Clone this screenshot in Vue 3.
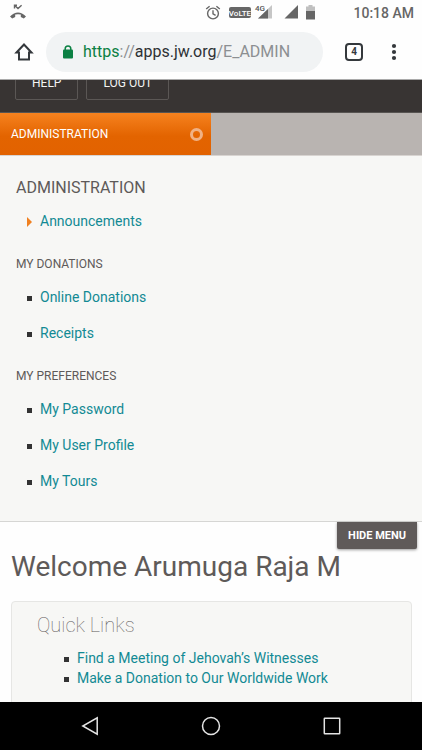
<script setup>
const groups = [
  { title: 'ADMINISTRATION', main: true, links: ['Announcements'] },
  { title: 'MY DONATIONS', links: ['Online Donations', 'Receipts'] },
  { title: 'MY PREFERENCES', links: ['My Password', 'My User Profile', 'My Tours'] }
]
const quickLinks = [
  'Find a Meeting of Jehovah’s Witnesses',
  'Make a Donation to Our Worldwide Work'
]
</script>

<template>
  <div class="screen">
    <div class="status">
      <svg class="missed" width="18" height="16" viewBox="0 0 18 16" aria-hidden="true">
        <path d="M5.500 4.500V1.200H8M5.500 1.300L9 4.600L12.600 1.200" fill="none" stroke="#666" stroke-width="1.400" />
        <path d="M1 12.400Q9 4.800 17 12.400L14.800 14.600L11.800 13V10.600Q9 9.800 6.200 10.600V13L3.200 14.600Z" fill="#666" />
      </svg>
      <svg class="indicators" width="112" height="18" viewBox="0 0 112 18" aria-hidden="true">
        <g fill="none" stroke="#666" stroke-width="1.4">
          <circle cx="8" cy="9.500" r="5.4" />
          <path d="M8 6.200V9.800L10.600 11.400M1.200 5L4.600 2.200M14.800 5L11.400 2.200" />
        </g>
        <rect x="24" y="3" width="22" height="11" rx="2" fill="#666" />
        <text x="35" y="12" class="volte" text-anchor="middle" fill="#fff">VoLTE</text>
        <path d="M67 1V14.500H53Z" fill="#c6c6c6" />
        <path d="M63 5V14.500H53Z" fill="#666" />
        <text x="50" y="7" class="net" fill="#555">4G</text>
        <path d="M93 1V14.500H79.500Z" fill="#666" />
        <path d="M101 2.500H103.500V1H107.500V2.500H110V7.500H101Z" fill="#c0c0c0" />
        <path d="M101 7H110V15.500H101Z" fill="#666" />
      </svg>
      <time>10:18 AM</time>
    </div>

    <div class="toolbar">
      <button class="icon home" type="button" aria-label="Home">
        <svg width="20" height="20" viewBox="0 0 20 20"><path d="M2.500 10.500L10 2.500L17.500 10.500H15V17.500H5V10.500Z" fill="none" stroke="#34383c" stroke-width="2" /></svg>
      </button>
      <div class="address">
        <svg width="12" height="14" viewBox="0 0 12 14" aria-hidden="true">
          <path d="M3.200 6V3.800A2.800 2.800 0 0 1 8.800 3.800V6" fill="none" stroke="#0b8043" stroke-width="1.500" />
          <rect x="1" y="4.500" width="10" height="9" rx="1" fill="#0b8043" />
        </svg>
        <span class="url"><span class="secure">https</span><span class="dim">://</span>apps.jw.org<span class="dim">/E_ADMIN</span></span>
      </div>
      <button class="tabs" type="button" aria-label="Open tabs">4</button>
      <button class="icon more" type="button" aria-label="More options">
        <svg width="6" height="18" viewBox="0 0 6 18" fill="#34383c"><circle cx="3" cy="3" r="2.100" /><circle cx="3" cy="9" r="2.100" /><circle cx="3" cy="15" r="2.100" /></svg>
      </button>
    </div>

    <main class="page">
      <header class="site">
        <button type="button">HELP</button>
        <button type="button">LOG OUT</button>
      </header>
      <div class="section">
        <button type="button">ADMINISTRATION<span class="ring"></span></button>
      </div>
      <nav class="menu">
        <section v-for="g in groups" :key="g.title" :class="{ main: g.main }">
          <h2>{{ g.title }}</h2>
          <ul>
            <li v-for="l in g.links" :key="l"><a href="#">{{ l }}</a></li>
          </ul>
        </section>
        <button class="hide" type="button">HIDE MENU</button>
      </nav>
      <div class="content">
        <h1>Welcome Arumuga Raja M</h1>
        <section class="card">
          <h2>Quick Links</h2>
          <ul>
            <li v-for="l in quickLinks" :key="l"><a href="#">{{ l }}</a></li>
          </ul>
        </section>
      </div>
    </main>

    <div class="system">
      <button type="button" aria-label="Back">
        <svg width="20" height="20" viewBox="0 0 20 20"><path d="M17.200 1.800V18.200L2.800 10Z" /></svg>
      </button>
      <button type="button" aria-label="Home screen">
        <svg width="20" height="20" viewBox="0 0 20 20"><circle cx="10" cy="10" r="8.500" /></svg>
      </button>
      <button type="button" aria-label="Recent apps">
        <svg width="20" height="20" viewBox="0 0 20 20"><rect x="2.300" y="2.300" width="15.400" height="15.400" rx="0.500" /></svg>
      </button>
    </div>
  </div>
</template>

<style>
body { margin: 0; background: #fff; }
</style>

<style scoped>
* { box-sizing: border-box; }
.screen { display: flex; flex-direction: column; height: 100vh; font-family: Roboto, "Liberation Sans", sans-serif; background: #fefefe; color: #5e5a59; }
button { font: inherit; margin: 0; padding: 0; border: 0; background: none; color: inherit; }
svg { display: block; }
h1, h2, ul { margin: 0; padding: 0; font-weight: 400; list-style: none; }
a { color: #128a94; text-decoration: none; }

.status { flex: none; display: flex; align-items: center; height: 26px; padding: 0 8px 0 9px; }
.missed { margin-bottom: 2px; }
.indicators { margin-left: auto; margin-right: 36px; }
.volte { font: 500 8px Roboto, sans-serif; }
.net { font: 500 8px Roboto, sans-serif; }
time { font-size: 14px; font-weight: 500; color: #666; }

.toolbar { flex: none; display: flex; align-items: center; height: 54px; padding: 0 25px 2px 14px; border-bottom: 1px solid #aaa; }
.address { flex: 1; display: flex; align-items: center; gap: 9px; height: 40px; margin: 0 22px 0 12px; padding: 0 16px; border-radius: 20px; background: #f1f3f4; }
.url { font-size: 16px; color: #2e3134; white-space: nowrap; }
.secure { color: #0b8043; }
.dim { color: #8c8f92; }
.tabs { width: 18px; height: 18px; margin-right: 28px; border: 2px solid #34383c; border-radius: 4px; font-size: 10px; line-height: 14px; font-weight: 700; color: #34383c; }

.page { flex: 1; min-height: 0; overflow: hidden; }
.site { display: flex; align-items: flex-end; gap: 8px; height: 33px; padding: 0 15px 12px; overflow: hidden; background: #383433; border-bottom: 1px solid #575452; }
.site button { flex: none; height: 34px; padding: 0 16px; border: 1px solid #5b5755; border-radius: 2px; font-size: 12px; color: #f4f4f4; }
.section { display: flex; background: #b9b4b1; border-bottom: 1px solid #d8d4d1; }
.section button { display: flex; align-items: center; justify-content: space-between; width: 50%; height: 42px; padding: 0 8px 0 11px; font-size: 12px; color: #fff; background: linear-gradient(#f6821f, #e36400 55%, #e26200); }
.ring { width: 13px; height: 13px; border: 3px solid #f0b184; border-radius: 50%; }

.menu { position: relative; padding: 19px 16px 22px; background: #f7f7f5; border-bottom: 1px solid #d6d6d4; }
.menu h2 { font-size: 12px; line-height: 26px; }
.menu .main h2 { font-size: 16px; line-height: 26px; }
.menu ul { padding-top: 2px; }
.menu section + section { padding-top: 12px; }
.menu li { display: flex; align-items: center; height: 36px; font-size: 14px; padding-left: 11px; }
li::before { content: ""; flex: none; width: 5px; height: 5px; margin: 2px 8px 0 0; background: #333; }
.main li::before { width: 0; height: 0; border: solid transparent; border-width: 5px 0 5px 5px; border-left-color: #f08020; background: none; }
.hide { position: absolute; right: 5px; top: 100%; padding: 0 11px; margin-top: 1px; font-size: 11px; line-height: 27px; font-weight: 700; color: #fff; background: #5f5a59; border-radius: 0 0 2px 2px; box-shadow: 0 1px 3px #0006; }

.content { padding: 27px 10px 0 11px; }
h1 { font-size: 28px; line-height: 36px; }
.card { margin-top: 16px; padding: 9px 25px 40px; background: #f7f7f5; border: 1px solid #e6e6e4; border-radius: 4px; }
.card h2 { font-size: 20px; line-height: 28px; font-weight: 100; color: #5e5a59; }
.card ul { padding: 9px 0 0 27px; }
.card li { display: flex; align-items: center; height: 20px; font-size: 14px; }

.system { flex: none; display: flex; align-items: center; justify-content: space-between; height: 48px; padding: 0 80px; background: #000; }
.system svg { fill: none; stroke: #e4e4e4; stroke-width: 1.500; }
</style>
